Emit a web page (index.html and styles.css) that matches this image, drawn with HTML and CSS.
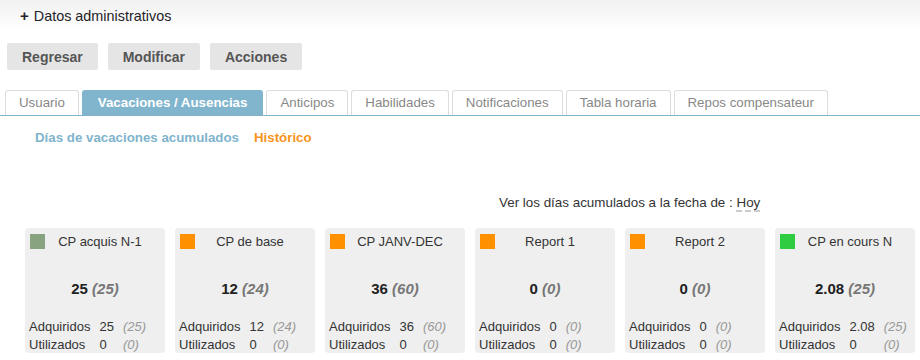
FILE: index.html
```html
<!DOCTYPE html>
<html lang="es">
  <head>
    <meta charset="UTF-8" />
    <title>Vacaciones / Ausencias</title>
    <link rel="stylesheet" href="styles.css">
  </head>
  <body>
    <div class="admin-header"><b>+</b> Datos administrativos</div>

    <div class="actions">
      <button>Regresar</button>
      <button>Modificar</button>
      <button>Acciones</button>
    </div>

    <ul class="tabs">
      <li>Usuario</li>
      <li class="active">Vacaciones / Ausencias</li>
      <li>Anticipos</li>
      <li>Habilidades</li>
      <li>Notificaciones</li>
      <li>Tabla horaria</li>
      <li>Repos compensateur</li>
    </ul>

    <div class="subtabs">
      <span class="current">Días de vacaciones acumulados</span>
      <span class="history">Histórico</span>
    </div>

    <div class="date-line">Ver los días acumulados a la fecha de : <span class="date-value">Hoy</span></div>

    <div class="counters">
      <div class="counter">
        <div class="counter-head"><span class="swatch grey"></span><span class="counter-title">CP acquis N-1</span></div>
        <div class="counter-total">25 <em>(25)</em></div>
        <table>
          <tr><td>Adquiridos</td><td>25</td><td><em>(25)</em></td></tr>
          <tr><td>Utilizados</td><td>0</td><td><em>(0)</em></td></tr>
        </table>
      </div>
      <div class="counter">
        <div class="counter-head"><span class="swatch orange"></span><span class="counter-title">CP de base</span></div>
        <div class="counter-total">12 <em>(24)</em></div>
        <table>
          <tr><td>Adquiridos</td><td>12</td><td><em>(24)</em></td></tr>
          <tr><td>Utilizados</td><td>0</td><td><em>(0)</em></td></tr>
        </table>
      </div>
      <div class="counter">
        <div class="counter-head"><span class="swatch orange"></span><span class="counter-title">CP JANV-DEC</span></div>
        <div class="counter-total">36 <em>(60)</em></div>
        <table>
          <tr><td>Adquiridos</td><td>36</td><td><em>(60)</em></td></tr>
          <tr><td>Utilizados</td><td>0</td><td><em>(0)</em></td></tr>
        </table>
      </div>
      <div class="counter">
        <div class="counter-head"><span class="swatch orange"></span><span class="counter-title">Report 1</span></div>
        <div class="counter-total">0 <em>(0)</em></div>
        <table>
          <tr><td>Adquiridos</td><td>0</td><td><em>(0)</em></td></tr>
          <tr><td>Utilizados</td><td>0</td><td><em>(0)</em></td></tr>
        </table>
      </div>
      <div class="counter">
        <div class="counter-head"><span class="swatch orange"></span><span class="counter-title">Report 2</span></div>
        <div class="counter-total">0 <em>(0)</em></div>
        <table>
          <tr><td>Adquiridos</td><td>0</td><td><em>(0)</em></td></tr>
          <tr><td>Utilizados</td><td>0</td><td><em>(0)</em></td></tr>
        </table>
      </div>
      <div class="counter">
        <div class="counter-head"><span class="swatch green"></span><span class="counter-title">CP en cours N</span></div>
        <div class="counter-total">2.08 <em>(25)</em></div>
        <table>
          <tr><td>Adquiridos</td><td>2.08</td><td><em>(25)</em></td></tr>
          <tr><td>Utilizados</td><td>0</td><td><em>(0)</em></td></tr>
        </table>
      </div>
    </div>
  </body>
</html>
```

FILE: styles.css
```css
body {
  margin: 0;
  font-family: "Liberation Sans", Arial, sans-serif;
  font-size: 13px;
  color: #333;
  background-color: #fff;
}

.admin-header {
  height: 31px;
  line-height: 32px;
  padding-left: 20px;
  font-size: 14.4px;
  color: #1f2328;
  background: linear-gradient(#f1f1f1, #fff);
}

.admin-header b {
  font-size: 15px;
  margin-right: 1px;
}

.actions {
  display: flex;
  gap: 10px;
  padding: 12px 0 0 7px;
}

.actions button {
  height: 27px;
  padding: 0 15px;
  border: none;
  border-radius: 2px;
  background-color: #e5e5e5;
  color: #555;
  font-family: inherit;
  font-size: 14px;
  font-weight: bold;
}

.tabs {
  display: flex;
  gap: 3px;
  list-style: none;
  margin: 20px 0 0;
  padding: 0 0 0 5px;
  border-bottom: 1px solid #7fb3cc;
}

.tabs li {
  height: 24px;
  line-height: 24px;
  padding: 0 13px;
  border: 1px solid #ddd;
  border-bottom: none;
  border-radius: 3px 3px 0 0;
  color: #888;
  font-size: 13.3px;
  white-space: nowrap;
}

.tabs li.active {
  padding: 0 15px;
  background-color: #81b5ce;
  border-color: #81b5ce;
  color: #fff;
  font-weight: bold;
}

.subtabs {
  display: flex;
  gap: 15px;
  padding: 14px 0 0 35px;
  font-size: 13.3px;
  font-weight: bold;
}

.subtabs .current {
  color: #80b4cd;
}

.subtabs .history {
  color: #f7941d;
}

.date-line {
  margin-top: 50px;
  padding-left: 499px;
  font-size: 13.4px;
  color: #333;
}

.date-value {
  border-bottom: 2px dashed #ccc;
}

.counters {
  display: flex;
  gap: 10px;
  padding: 18px 0 0 25px;
}

.counter {
  width: 140px;
  height: 125px;
  background-color: #efefef;
  border-radius: 4px;
  display: flex;
  flex-direction: column;
}

.counter-head {
  display: flex;
  align-items: center;
  padding: 6px 10px 0 5px;
}

.swatch {
  width: 15px;
  height: 15px;
  flex-shrink: 0;
}

.swatch.grey {
  background-color: #87a37f;
}

.swatch.orange {
  background-color: #ff9000;
}

.swatch.green {
  background-color: #2ecc40;
}

.counter-title {
  flex: 1;
  text-align: center;
  line-height: 15px;
}

.counter-total {
  margin-top: 31px;
  text-align: center;
  font-size: 15px;
  font-weight: bold;
  color: #222;
}

.counter-total em {
  color: #777;
}

.counter table {
  align-self: flex-start;
  margin-top: auto;
  border-collapse: collapse;
}

.counter td {
  height: 18px;
  padding: 0 5px 0 4px;
  color: #333;
}

.counter td em {
  color: #999;
}
```
